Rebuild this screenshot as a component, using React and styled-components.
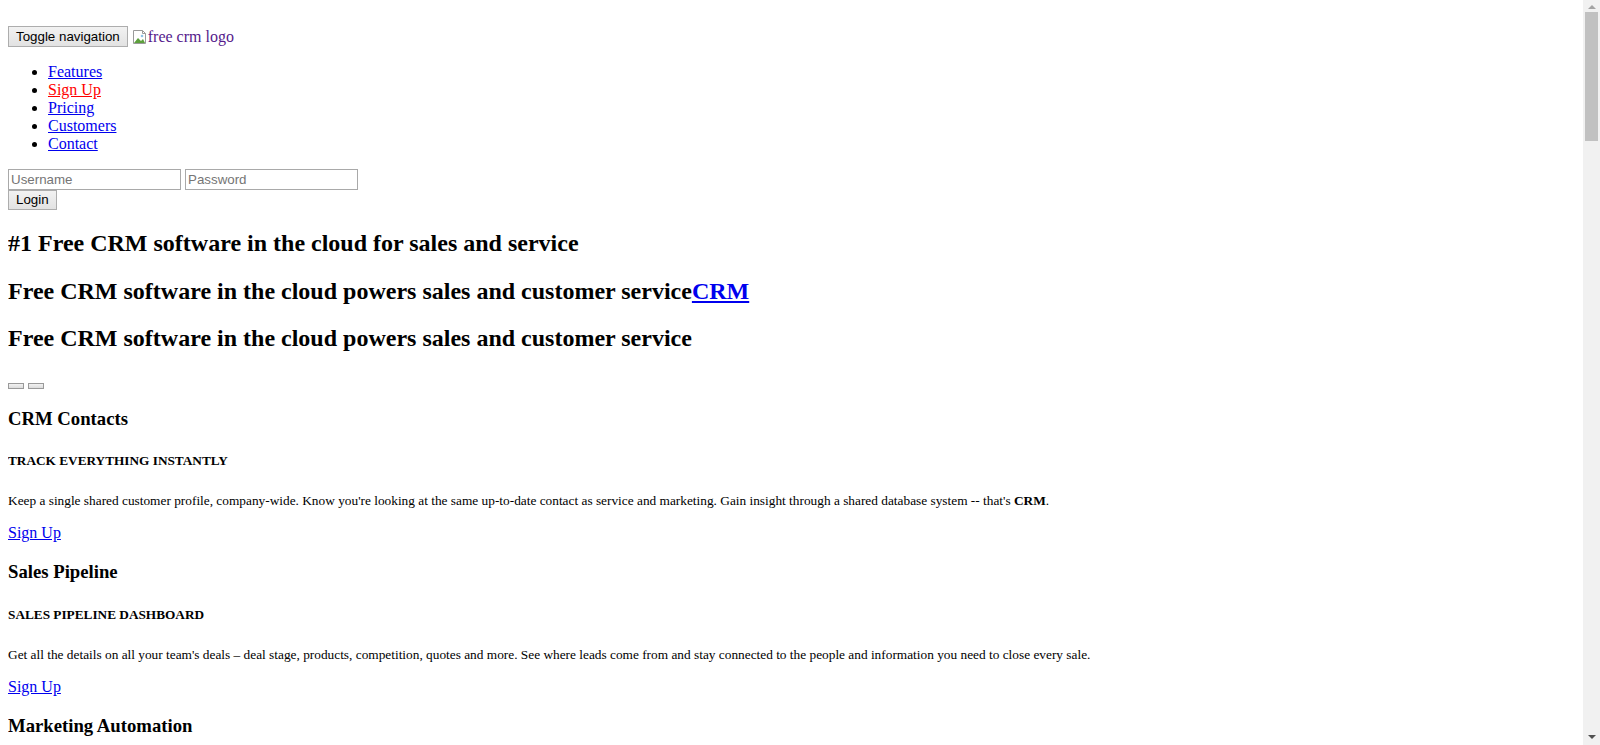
import React from "react"
import styled, { createGlobalStyle } from "styled-components"

const Global = createGlobalStyle`
  html, body { background: #fff; }
  body {
    margin: 8px;
    font-family: "Liberation Serif", "Times New Roman", serif;
    font-size: 16px;
    color: #000;
  }
`

const Header = styled.div`
  display: flex;
  align-items: center;
  gap: 4px;
  padding-top: 18px;
  height: 21px;
`
const NativeButton = styled.button`
  font-family: "Liberation Sans", Arial, sans-serif;
  font-size: 13.33px;
  color: #000;
  height: ${p => p.$h || 21}px;
  padding: 0 7px;
  margin: 0;
  border: 1px solid #adadad;
  border-radius: 0;
  background: linear-gradient(#f2f2f2, #e2e2e2);
  line-height: 1;
`
const Logo = styled.a`
  display: inline-flex;
  align-items: center;
  color: #551a8b;
  text-decoration: none;
  font-size: 16px;
`
const NavList = styled.ul`
  margin: 16px 0;
  padding-left: 40px;
  list-style: disc;
  line-height: 18px;
`
const NavLink = styled.a`
  color: ${p => (p.$hot ? "#ff0000" : "#0000ee")};
  text-decoration: underline;
`
const LoginForm = styled.form`
  display: flex;
  flex-direction: column;
  align-items: flex-start;
`
const InputRow = styled.div`
  display: flex;
  gap: 4px;
`
const TextInput = styled.input`
  box-sizing: border-box;
  width: 173px;
  height: 21px;
  margin: 0;
  padding: 1px 2px;
  border: 1px solid #a9a9a9;
  font-family: "Liberation Sans", Arial, sans-serif;
  font-size: 13.33px;
  &::placeholder { color: #757575; }
`
const Hero = styled.h2`
  font-size: 24px;
  font-weight: bold;
  margin: 20px 0;
  line-height: 27.6px;
  a { color: #0000ee; }
`
const Indicators = styled.div`
  display: flex;
  gap: 4px;
  padding-top: 10px;
`
const Dot = styled.button`
  width: 16px;
  height: 6px;
  padding: 0;
  margin: 0;
  border: 1px solid #9a9a9a;
  background: linear-gradient(#f2f2f2, #dcdcdc);
`
const Feature = styled.section``
const FeatureTitle = styled.h3`
  font-size: 18.72px;
  line-height: 21.5px;
  margin: 18.72px 0;
`
const FeatureKicker = styled.h5`
  font-size: 13.28px;
  line-height: 15.3px;
  margin: 24px 0 23px;
`
const Para = styled.p`
  margin: 14px 0 15px;
  line-height: 18px;
  small { font-size: 13.33px; }
  a { color: #0000ee; }
`
const Blurb = styled(Para)`
  margin-bottom: 14px;
`
const FooterList = styled.ul`
  margin: 16px 0;
  padding-left: 40px;
  line-height: 18px;
  a { color: #0000ee; }
`

/* browser scrollbar, drawn over the right edge */
const ScrollTrack = styled.div`
  position: fixed;
  top: 0;
  right: 0;
  width: 17px;
  height: 100vh;
  background: #f1f1f1;
  display: flex;
  flex-direction: column;
  align-items: center;
`
const ScrollArrow = styled.div`
  width: 0;
  height: 0;
  border-left: 4px solid transparent;
  border-right: 4px solid transparent;
  ${p =>
    p.$down
      ? `border-top: 4px solid #505050; margin-top: auto; margin-bottom: 6px;`
      : `border-bottom: 4px solid #a3a3a3; margin-top: 5px;`}
`
const ScrollThumb = styled.div`
  width: 13px;
  height: 129px;
  margin-top: 3px;
  background: #c1c1c1;
`

const features = [
  {
    title: "CRM Contacts",
    kicker: "TRACK EVERYTHING INSTANTLY",
    text: (
      <>
        Keep a single shared customer profile, company-wide. Know you're looking at the same up-to-date contact as service and marketing. Gain insight through a shared database system -- that's <b>CRM</b>.
      </>
    ),
  },
  {
    title: "Sales Pipeline",
    kicker: "SALES PIPELINE DASHBOARD",
    text: "Get all the details on all your team's deals – deal stage, products, competition, quotes and more. See where leads come from and stay connected to the people and information you need to close every sale.",
  },
  {
    title: "Marketing Automation",
    kicker: "CAMPAIGNS THAT CONVERT",
    text: "Send targeted email campaigns, track opens and clicks, and hand hot leads straight to your sales team. Every touch is logged on the contact record automatically.",
  },
  {
    title: "Customer Service",
    kicker: "CASES AND TICKETS",
    text: "Resolve customer issues faster with case tracking, assignment rules and a complete history of every conversation across email, phone and social.",
  },
  {
    title: "Calendar and Tasks",
    kicker: "NEVER MISS A FOLLOW-UP",
    text: "Shared calendars, task lists and reminders keep your whole team on schedule. Book meetings, set call backs and see what is due today at a glance.",
  },
  {
    title: "Documents",
    kicker: "ONE PLACE FOR EVERY FILE",
    text: "Store proposals, contracts and presentations alongside the contacts and deals they belong to. Version history keeps everyone working from the latest copy.",
  },
  {
    title: "Reports and Analytics",
    kicker: "KNOW YOUR NUMBERS",
    text: "Build reports on any field, schedule them by email and watch your dashboards update in real time as your team closes business.",
  },
  {
    title: "Mobile CRM",
    kicker: "WORK FROM ANYWHERE",
    text: "Access contacts, deals and tasks from your phone or tablet. Log calls and update records on the road, and everything syncs back to the office instantly.",
  },
  {
    title: "Social CRM",
    kicker: "LISTEN AND ENGAGE",
    text: "Monitor what customers are saying about your brand on Twitter and Facebook and respond directly from the contact record.",
  },
  {
    title: "Telephony",
    kicker: "CALL FROM YOUR BROWSER",
    text: "Click to call any contact, record conversations and log every call automatically with built-in VoIP telephony.",
  },
  {
    title: "Email Integration",
    kicker: "INBOX MEETS CRM",
    text: "Sync your email with Gmail and Outlook so every message is attached to the right contact, company and deal.",
  },
  {
    title: "Projects",
    kicker: "DELIVER ON TIME",
    text: "Plan projects, assign tasks and track milestones for every customer from the same place you manage the relationship.",
  },
  {
    title: "Security",
    kicker: "YOUR DATA IS SAFE",
    text: "Encrypted connections, daily backups and role-based permissions keep your customer data private and protected.",
  },
  {
    title: "Integrations",
    kicker: "CONNECT YOUR TOOLS",
    text: "Connect accounting, support and marketing apps through our open API and keep your data flowing between systems.",
  },
  {
    title: "Customization",
    kicker: "MAKE IT YOURS",
    text: "Add custom fields, rename modules and design your own pipelines so the CRM fits the way your business works.",
  },
  {
    title: "Support",
    kicker: "HERE TO HELP",
    text: "Our team is available by email and phone to help you get set up, import your data and train your staff.",
  },
  {
    title: "Free Forever",
    kicker: "NO CREDIT CARD REQUIRED",
    text: "Get started in minutes with a free account for your whole team. Upgrade only when you need more storage or advanced features.",
  },
]

const BrokenImage = () => (
  <svg width="16" height="16" viewBox="0 0 16 16">
    <path d="M1.5 1.5h9l3 3v10h-12z" fill="#fff" stroke="#9a9a9a" />
    <path d="M10.5 1.5v3h3" fill="none" stroke="#9a9a9a" />
    <path d="M2 14l4-5 3 3 2-2 2 4z" fill="#5da03c" />
    <circle cx="10" cy="7" r="1.3" fill="#8ec3e8" />
  </svg>
)

export default function App() {
  return (
    <>
      <Global />
      <nav>
        <Header>
          <NativeButton type="button">Toggle navigation</NativeButton>
          <Logo href="#">
            <BrokenImage />
            free crm logo
          </Logo>
        </Header>
        <NavList>
          <li><NavLink href="#">Features</NavLink></li>
          <li><NavLink href="#" $hot>Sign Up</NavLink></li>
          <li><NavLink href="#">Pricing</NavLink></li>
          <li><NavLink href="#">Customers</NavLink></li>
          <li><NavLink href="#">Contact</NavLink></li>
        </NavList>
        <LoginForm onSubmit={e => e.preventDefault()}>
          <InputRow>
            <TextInput type="text" placeholder="Username" />
            <TextInput type="password" placeholder="Password" />
          </InputRow>
          <NativeButton type="submit" $h={20}>Login</NativeButton>
        </LoginForm>
      </nav>

      <Hero>#1 Free CRM software in the cloud for sales and service</Hero>
      <Hero>
        Free CRM software in the cloud powers sales and customer service<a href="#">CRM</a>
      </Hero>
      <Hero>Free CRM software in the cloud powers sales and customer service</Hero>

      <Indicators>
        <Dot type="button" aria-label="previous" />
        <Dot type="button" aria-label="next" />
      </Indicators>

      {features.map(f => (
        <Feature key={f.title}>
          <FeatureTitle>{f.title}</FeatureTitle>
          <FeatureKicker>{f.kicker}</FeatureKicker>
          <Blurb><small>{f.text}</small></Blurb>
          <Para><a href="#">Sign Up</a></Para>
        </Feature>
      ))}

      <FooterList>
        <li><a href="#">About</a></li>
        <li><a href="#">Privacy Policy</a></li>
        <li><a href="#">Terms of Service</a></li>
        <li><a href="#">Contact</a></li>
      </FooterList>
      <Para><small>© FreeCRM.com. All rights reserved.</small></Para>

      <ScrollTrack aria-hidden="true">
        <ScrollArrow />
        <ScrollThumb />
        <ScrollArrow $down />
      </ScrollTrack>
    </>
  )
}
